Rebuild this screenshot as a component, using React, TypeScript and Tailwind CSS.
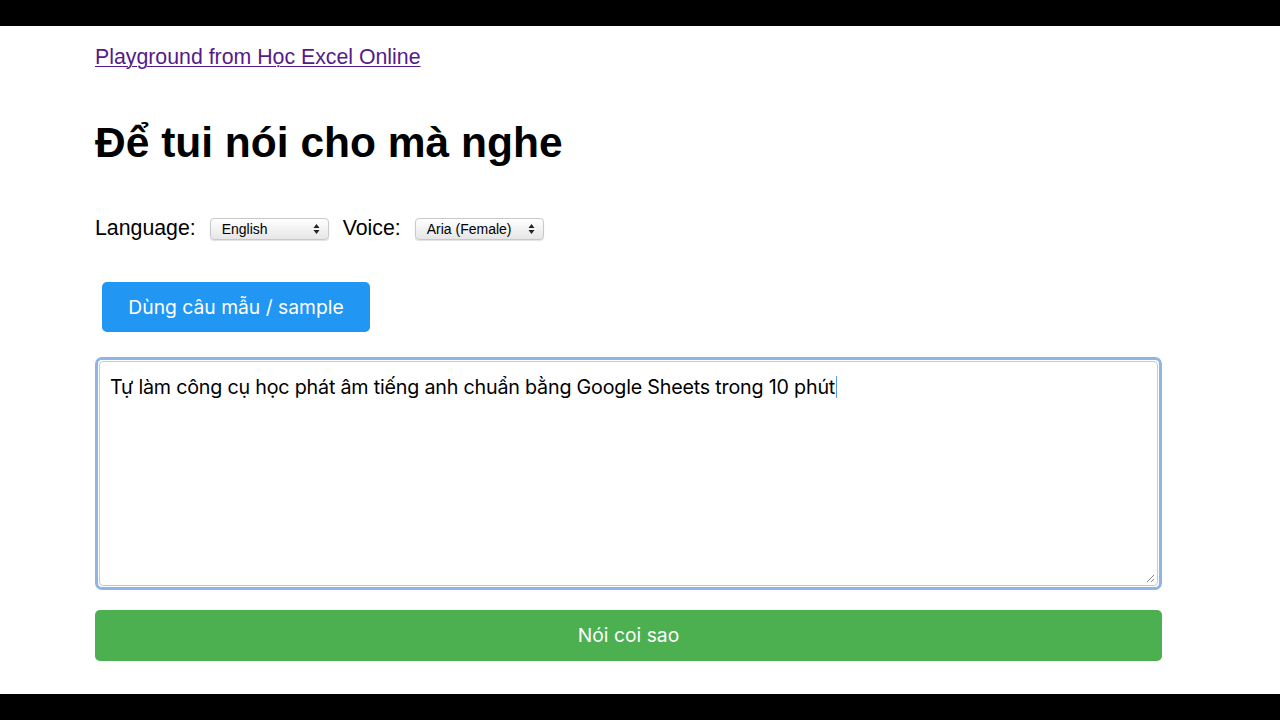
function SelectBox({ label, width }: { label: string; width: string }) {
  return (
    <div
      className={`flex items-center justify-between h-[22px] ${width} pl-[11px] pr-[8px] rounded-[4px] border border-[#c8c8c8] bg-gradient-to-b from-[#ffffff] to-[#e6e6e6] shadow-[0_1px_1px_rgba(0,0,0,0.12)]`}
    >
      <span className="text-[14px] leading-none text-black font-['Liberation_Sans',Arial,sans-serif]">{label}</span>
      <svg width="7" height="12" viewBox="0 0 7 12" className="text-[#222]">
        <path d="M3.5 1 L6.5 5 L0.5 5 Z" fill="currentColor" />
        <path d="M3.5 11 L6.5 7 L0.5 7 Z" fill="currentColor" />
      </svg>
    </div>
  );
}

export default function App() {
  return (
    <div className="flex flex-col h-[720px] w-[1280px] bg-white overflow-hidden">
      <div className="h-[26px] bg-black shrink-0" />

      <main className="flex-1 pl-[95px] pr-[118px] pt-[19px] font-['Liberation_Sans',Arial,sans-serif]">
        <a
          href="#"
          className="text-[21.3px] leading-[24px] text-[#551a8b] underline decoration-1 underline-offset-[2px]"
        >
          Playground from Học Excel Online
        </a>

        <h1 className="mt-[49px] text-[42.5px] leading-[46px] font-bold text-black">
          Để tui nói cho mà nghe
        </h1>

        <div className="mt-[50px] flex items-center h-[26px] text-[21.3px] text-black">
          <span>Language:</span>
          <div className="ml-[14px]">
            <SelectBox label="English" width="w-[119px]" />
          </div>
          <span className="ml-[14px]">Voice:</span>
          <div className="ml-[14px]">
            <SelectBox label="Aria (Female)" width="w-[129px]" />
          </div>
        </div>

        <button className="mt-[40px] ml-[7px] h-[50px] w-[268px] rounded-[5px] bg-[#2196f3] text-white text-[19.3px] font-['Inter','Noto_Sans',sans-serif]">
          Dùng câu mẫu / sample
        </button>

        <div className="mt-[25px] h-[233px] w-[1067px] rounded-[7px] border-[3px] border-[#8fb4e6] p-[1px]">
          <div className="relative h-full w-full rounded-[4px] border border-[#c9c9c9] bg-white px-[10px] pt-[12px]">
            <p className="text-[19.7px] leading-[26px] text-black font-['Inter','Noto_Sans',sans-serif] tracking-[-0.2px]">
              Tự làm công cụ học phát âm tiếng anh chuẩn bằng Google Sheets trong 10 phút
              <span className="inline-block align-[-4px] ml-[1px] h-[22px] w-[1px] bg-[#5b9bea]" />
            </p>
            <svg width="9" height="9" viewBox="0 0 9 9" className="absolute right-[2px] bottom-[2px]">
              <path d="M8 1 L1 8 M8 5 L5 8" stroke="#888" strokeWidth="1" />
            </svg>
          </div>
        </div>

        <button className="mt-[20px] h-[51px] w-[1067px] rounded-[5px] bg-[#4caf50] text-white text-[19.3px] font-['Inter','Noto_Sans',sans-serif]">
          Nói coi sao
        </button>
      </main>

      <div className="h-[26px] bg-black shrink-0" />
    </div>
  );
}
